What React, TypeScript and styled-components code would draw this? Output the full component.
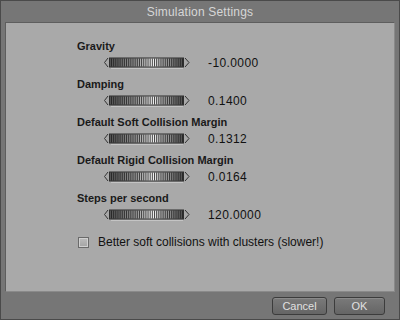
import React, { useState } from 'react';
import styled, { createGlobalStyle } from 'styled-components';

const GlobalStyle = createGlobalStyle`
  html, body {
    margin: 0;
    padding: 0;
    background: #747474;
  }
  body {
    font-family: 'Liberation Sans', Arial, sans-serif;
  }
`;

const Window = styled.div`
  width: 400px;
  height: 320px;
  box-sizing: border-box;
  background: #767676;
  border: 1px solid #4a4a4a;
  display: flex;
  flex-direction: column;
`;

const TitleBar = styled.div`
  height: 21px;
  display: flex;
  align-items: center;
  justify-content: center;
  color: #d6d6d6;
  font-size: 12px;
  letter-spacing: 0.2px;
`;

const Panel = styled.div`
  margin: 0 4px;
  height: 270px;
  box-sizing: border-box;
  background: #a9a9a9;
  border: 1px solid #5e5e5e;
  border-bottom-color: #8a8a8a;
  border-right-color: #8a8a8a;
  padding: 16px 0 0 71px;
  display: flex;
  flex-direction: column;
`;

const Group = styled.div`
  display: flex;
  flex-direction: column;
  height: 38px;
`;

const Label = styled.div`
  font-size: 11px;
  font-weight: bold;
  color: #1a1a1a;
  height: 14px;
  line-height: 14px;
`;

const SliderRow = styled.div`
  display: flex;
  align-items: center;
  height: 20px;
  padding-left: 26px;
  gap: 17px;
`;

const Value = styled.span`
  font-size: 12px;
  color: #111;
  letter-spacing: 0.4px;
`;

const CheckRow = styled.label`
  display: flex;
  align-items: center;
  gap: 9px;
  margin-top: 6px;
  padding-left: 1px;
  font-size: 12px;
  color: #111;
`;

const Box = styled.span`
  width: 9px;
  height: 9px;
  border: 1px solid #6a6a6a;
  background: linear-gradient(#bcbcbc, #a4a4a4);
  box-shadow: inset 0 0 0 1px #d0d0d0;
`;

const Footer = styled.div`
  flex: 1;
  display: flex;
  justify-content: flex-end;
  align-items: center;
  gap: 7px;
  padding-right: 14px;
`;

const Button = styled.button`
  height: 18px;
  width: ${(p: { $w: number }) => p.$w}px;
  box-sizing: border-box;
  border: 1px solid #3c3c3c;
  border-radius: 3px;
  background: linear-gradient(#7a7a7a, #656565);
  box-shadow: inset 0 1px 0 #8a8a8a;
  color: #e0e0e0;
  font-family: 'Liberation Sans', Arial, sans-serif;
  font-size: 11px;
  padding: 0;
`;

function Slider() {
  const ticks = [];
  for (let i = 0; i < 34; i++) {
    ticks.push(<rect key={i} x={8 + i * 2.15} y={1.5} width={1} height={8} fill="#1e1e1e" opacity={0.8} />);
  }
  return (
    <svg width="88" height="12" viewBox="0 0 88 12">
      <defs>
        <linearGradient id="sg" x1="0" x2="1" y1="0" y2="0">
          <stop offset="0" stopColor="#505050" />
          <stop offset="0.4" stopColor="#a8a8a8" />
          <stop offset="0.58" stopColor="#f6f6f6" />
          <stop offset="0.72" stopColor="#b0b0b0" />
          <stop offset="1" stopColor="#505050" />
        </linearGradient>
      </defs>
      <path d="M5 1 L1.5 5.5 L5 10" fill="none" stroke="#333" strokeWidth="1" />
      <rect x="6.5" y="1" width="74" height="9" fill="url(#sg)" stroke="#2e2e2e" strokeWidth="1" />
      {ticks}
      <path d="M82 1 L86 5.5 L82 10" fill="none" stroke="#333" strokeWidth="1" />
      <line x1="8" y1="11.5" x2="80" y2="11.5" stroke="#c4c4c4" strokeWidth="1" />
    </svg>
  );
}

const settings = [
  { label: 'Gravity', value: '-10.0000' },
  { label: 'Damping', value: '0.1400' },
  { label: 'Default Soft Collision Margin', value: '0.1312' },
  { label: 'Default Rigid Collision Margin', value: '0.0164' },
  { label: 'Steps per second', value: '120.0000' },
];

export default function App() {
  const [clusters] = useState(false);
  return (
    <>
      <GlobalStyle />
      <Window>
        <TitleBar>Simulation Settings</TitleBar>
        <Panel>
          {settings.map((s) => (
            <Group key={s.label}>
              <Label>{s.label}</Label>
              <SliderRow>
                <Slider />
                <Value>{s.value}</Value>
              </SliderRow>
            </Group>
          ))}
          <CheckRow>
            <Box data-checked={clusters} />
            Better soft collisions with clusters (slower!)
          </CheckRow>
        </Panel>
        <Footer>
          <Button $w={55}>Cancel</Button>
          <Button $w={51}>OK</Button>
        </Footer>
      </Window>
    </>
  );
}
